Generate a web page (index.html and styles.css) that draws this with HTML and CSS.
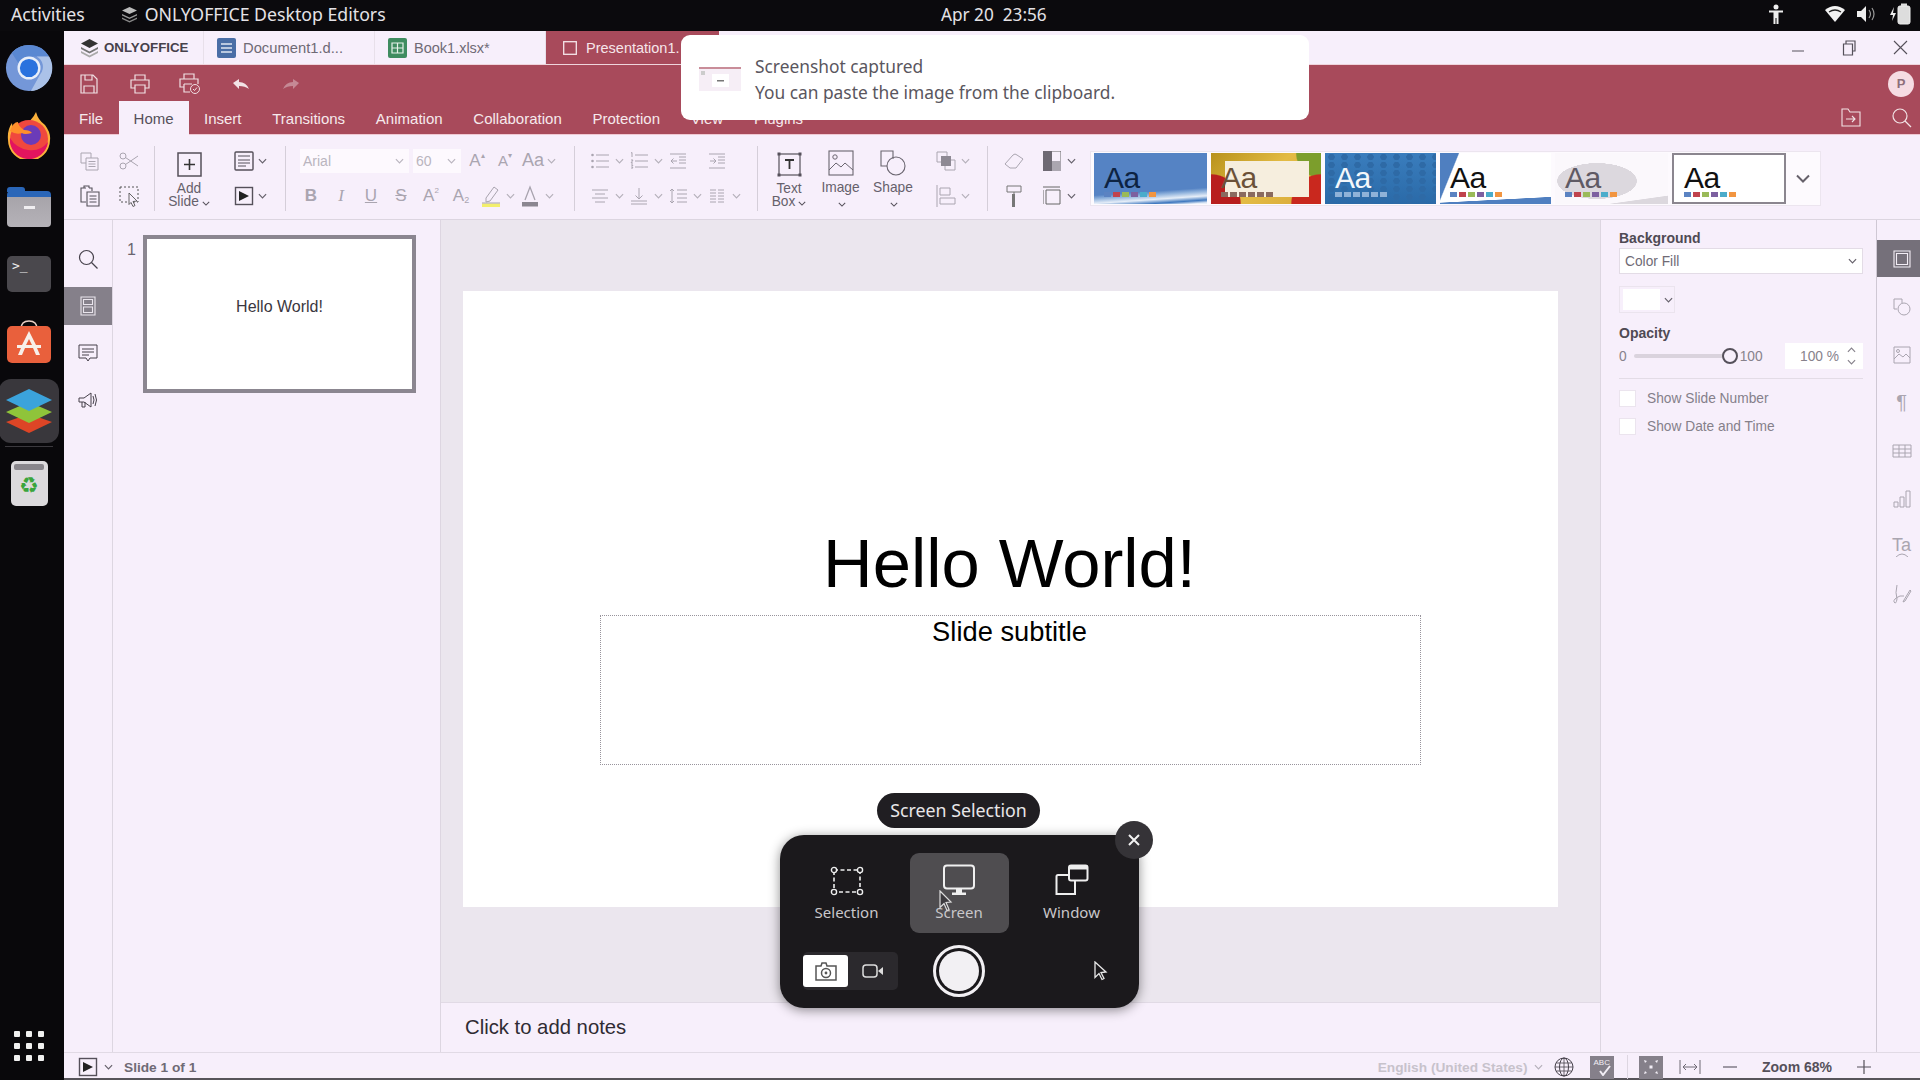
FILE: index.html
```html
<!DOCTYPE html>
<html lang="en">

<head>
    <meta charset="UTF-8">
    <title>ONLYOFFICE Desktop Editors</title>
    <link rel="stylesheet" href="styles.css">
</head>

<body>

    <svg class="sprite" width="0" height="0">
        <symbol id="chev" viewBox="0 0 10 6"><path d="M1 1l4 4 4-4" fill="none" stroke="currentColor" stroke-width="1.3"/></symbol>
        <symbol id="play" viewBox="0 0 20 20"><rect x="1.5" y="1.5" width="17" height="17" fill="none" stroke="currentColor" stroke-width="1.4"/><path d="M5 5l10 5-10 5z" fill="#222"/></symbol>
    </svg>

    <div class="topbar">
        <span class="top-activities">Activities</span>
        <svg class="top-logo" width="17" height="17" viewBox="0 0 17 17"><path d="M8.500 1L16 4.500 8.500 8 1 4.500z" fill="#bbb"/><path d="M1 8l7.500 3.500L16 8v1.500L8.500 13 1 9.500z" fill="#999"/><path d="M1 11.500L8.500 15l7.500-3.500V13l-7.500 3.500L1 13z" fill="#888"/></svg>
        <span class="top-app">ONLYOFFICE Desktop Editors</span>
        <span class="top-clock">Apr 20&nbsp; 23:56</span>
        <div class="top-tray">
            <svg width="18" height="22" viewBox="0 0 18 22"><circle cx="9" cy="4" r="2.500" fill="#eee"/><path d="M2 7.500h14v2h-4.500V21h-2v-6h-1v6h-2V9.500H2z" fill="#eee"/></svg>
            <svg width="22" height="20" viewBox="0 0 22 20"><path d="M1 6q10-8 20 0L11 18z" fill="#f2f2f2"/><path d="M5 8q6-4 12 0" fill="none" stroke="#222" stroke-width="1.300"/></svg>
            <svg width="20" height="20" viewBox="0 0 20 20"><path d="M1 7h4l5-5v16l-5-5H1z" fill="#eee"/><path d="M13 6q3 4 0 8M16 4q4 6 0 12" fill="none" stroke="#999" stroke-width="1.200"/></svg>
            <svg width="22" height="24" viewBox="0 0 22 24"><path d="M5 5L1 13h3l-1 6 4-8H4z" fill="#eee"/><rect x="9" y="4" width="12" height="18" rx="2" fill="#ddd" stroke="#eee"/><rect x="12" y="1.500" width="6" height="2.500" fill="#ddd"/></svg>
        </div>
    </div>

    <div class="desk">
        <div class="dock">
            <div class="dock-item">
                <svg width="48" height="50" viewBox="0 0 50 50"><circle cx="25" cy="25" r="24" fill="#7497d8"/><path d="M25 1a24 24 0 0 1 21 12H25a12 12 0 0 0-11 7L7 9A24 24 0 0 1 25 1z" fill="#5a88d2"/><path d="M37 31L27 49a24 24 0 0 0 19-36H33a12 12 0 0 1 4 18z" fill="#abc2e8"/><circle cx="25" cy="25" r="12" fill="#e9eff9"/><circle cx="25" cy="25" r="9.500" fill="#2a72de"/></svg>
            </div>
            <div class="dock-item">
                <svg class="dock-fox" width="46" height="48" viewBox="0 0 46 48"><path d="M30 1q2 8 9 13 6 8 5 15a21 21 0 0 1-42 0q-1-10 4-17 0 5 4 6 3-4 8-5 8-3 12-12z" fill="#fbb03b"/><circle cx="23" cy="28" r="19" fill="#f0483e"/><path d="M4 27a19 19 0 0 0 38 4q-8 10-20 8T4 27z" fill="#e3145e"/><circle cx="25" cy="24" r="10" fill="#6b3bb8"/><path d="M4 20q3-9 8-9 0 4 6 8 6 0 8 3-8 2-10 0-6 2-12-2z" fill="#ff8f2b"/></svg>
            </div>
            <div class="dock-item">
                <div class="dock-folder"><span class="dock-folder-tab"></span><span class="dock-folder-slot"></span></div>
            </div>
            <div class="dock-item">
                <div class="dock-term">&gt;_</div>
            </div>
            <div class="dock-item">
                <svg width="46" height="46" viewBox="0 0 46 46"><path d="M15 10q0-8 8-8t8 8" fill="none" stroke="#e9cfc4" stroke-width="1.500"/><rect x="1" y="7" width="44" height="37" rx="5" fill="#e9603c"/><path d="M23 12l7 14h5v3h-4l3 7h-4l-3-7H19l-3 7h-4l3-7h-4v-3h5zm0 8l-3 6h6z" fill="#f7efe9"/></svg>
            </div>
            <div class="dock-item dock-item-active">
                <svg width="50" height="46" viewBox="0 0 50 46"><path d="M25 26l23 8-23 11L2 34z" fill="#dd4526"/><path d="M25 14l23 10-23 11L2 24z" fill="#8fc43a"/><path d="M25 1l23 11-23 11L2 12z" fill="#3ba3dc"/></svg>
            </div>
            <div class="dock-line"></div>
            <div class="dock-item">
                <div class="dock-trash"><span class="dock-trash-lid"></span><span class="dock-trash-mark">♻</span></div>
            </div>
            <div class="dock-grid">
                <span></span><span></span><span></span><span></span><span></span><span></span><span></span><span></span><span></span>
            </div>
        </div>

        <div class="app">
            <div class="tabs">
                <div class="tab-logo">
                    <svg width="19" height="20" viewBox="0 0 19 20"><path d="M9.500 1L18 5.500 9.500 10 1 5.500z" fill="#333"/><path d="M1 9l8.500 4.500L18 9v2l-8.500 4.500L1 11z" fill="#777"/><path d="M1 13l8.500 4.500L18 13v2l-8.500 4.500L1 15z" fill="#aaa"/></svg>
                    <span>ONLYOFFICE</span>
                </div>
                <div class="tab">
                    <svg width="19" height="20" viewBox="0 0 19 20"><rect width="19" height="20" rx="2" fill="#4a6ea6"/><path d="M4 6h11M4 10h11M4 14h11" stroke="#dfe6f2" stroke-width="1.500"/></svg>
                    <span class="tab-doc">Document1.d...</span>
                </div>
                <div class="tab">
                    <svg width="19" height="20" viewBox="0 0 19 20"><rect width="19" height="20" rx="2" fill="#3f8c60"/><path d="M4 5h11v10H4zM9.500 5v10M4 10h11" fill="none" stroke="#e6f2ea" stroke-width="1.200"/></svg>
                    <span class="tab-book">Book1.xlsx*</span>
                </div>
                <div class="tab tab-active">
                    <svg width="14" height="14" viewBox="0 0 14 14"><rect x=".7" y=".7" width="12.600" height="12.600" fill="none" stroke="#f6e6ea" stroke-width="1.300"/></svg>
                    <span>Presentation1.</span>
                </div>
                <div class="win-controls">
                    <div class="cell"><svg width="14" height="14" viewBox="0 0 14 14"><path d="M1 10h12" stroke="#8c8792" stroke-width="1.500"/></svg></div>
                    <div class="cell"><svg width="14" height="16" viewBox="0 0 14 16"><path d="M1.500 4h9v11h-9zM4 4V1h9v10h-2.500" fill="none" stroke="#55505a" stroke-width="1.200"/></svg></div>
                    <div class="cell"><svg width="15" height="15" viewBox="0 0 15 15"><path d="M1 1l13 13M14 1L1 14" stroke="#55505a" stroke-width="1.100"/></svg></div>
                </div>
            </div>

            <div class="head">
                <div class="quick">
                    <div class="quick-cell"><svg width="18" height="20" viewBox="0 0 18 20"><path d="M1 1h12l4 4v14H1zM5 1v5h7V1M4 19v-7h10v7" fill="none" stroke="currentColor" stroke-width="1.200"/></svg></div>
                    <div class="quick-cell"><svg width="20" height="20" viewBox="0 0 20 20"><path d="M5 6V1h10v5M5 14H1V6h18v8h-4M5 11h10v8H5z" fill="none" stroke="currentColor" stroke-width="1.200"/></svg></div>
                    <div class="quick-cell"><svg width="22" height="22" viewBox="0 0 22 22"><path d="M5 6V1h10v5M5 14H1V6h18v5M5 11h8M5 11v8h6" fill="none" stroke="currentColor" stroke-width="1.200"/><circle cx="16" cy="16" r="4.500" fill="none" stroke="currentColor"/><path d="M14 16l1.500 1.500 2.500-3" fill="none" stroke="currentColor"/></svg></div>
                    <div class="quick-cell"><svg width="18" height="12" viewBox="0 0 18 12"><path d="M1 5l6-4v3q7 0 10 7-4-3-10-3v3z" fill="#f2e3e6"/></svg></div>
                    <div class="quick-cell quick-off"><svg width="18" height="12" viewBox="0 0 18 12"><path d="M17 5l-6-4v3Q4 4 1 11q4-3 10-3v3z" fill="currentColor"/></svg></div>
                    <div class="avatar">P</div>
                </div>
                <div class="menu">
                    <span class="menu-item">File</span>
                    <span class="menu-item menu-on">Home</span>
                    <span class="menu-item">Insert</span>
                    <span class="menu-item">Transitions</span>
                    <span class="menu-item">Animation</span>
                    <span class="menu-item">Collaboration</span>
                    <span class="menu-item">Protection</span>
                    <span class="menu-item">View</span>
                    <span class="menu-item">Plugins</span>
                    <div class="menu-right">
                        <div class="cell"><svg width="20" height="20" viewBox="0 0 20 20"><path d="M1 18V1h6l2 3h10v14zM5 11h9M11 8l3 3-3 3" fill="none" stroke="#f2e3e6" stroke-width="1.100"/></svg></div>
                        <div class="cell"><svg width="20" height="20" viewBox="0 0 20 20"><circle cx="8" cy="8" r="7" fill="none" stroke="#f2e3e6" stroke-width="1.200"/><path d="M13 13l6 6" stroke="#f2e3e6" stroke-width="1.200"/></svg></div>
                    </div>
                </div>
            </div>

            <div class="ribbon">
                <div class="group group-clip">
                    <div class="row">
                        <div class="tool off"><svg width="20" height="20" viewBox="0 0 20 20"><path d="M1 2h10v10H1z" fill="none" stroke="currentColor"/><path d="M6 7h12v12H6z" fill="#f7effb" stroke="currentColor"/><path d="M8.500 10.500h7M8.500 13h7M8.500 15.500h7" stroke="currentColor"/></svg></div>
                        <div class="tool off"><svg width="20" height="18" viewBox="0 0 20 18"><circle cx="4" cy="4" r="3" fill="none" stroke="currentColor"/><circle cx="4" cy="14" r="3" fill="none" stroke="currentColor"/><path d="M6.500 5.500L19 14M6.500 12.500L19 4" stroke="currentColor"/></svg></div>
                    </div>
                    <div class="row">
                        <div class="tool"><svg width="20" height="22" viewBox="0 0 20 22"><path d="M6 3H1v14h5M4 3V1h5v2M9 3h3v3" fill="none" stroke="currentColor" stroke-width="1.100"/><path d="M7 7h12v14H7zM9.500 11h7M9.500 14h7M9.500 17h7" fill="none" stroke="currentColor" stroke-width="1.100"/></svg></div>
                        <div class="tool off"><svg width="20" height="22" viewBox="0 0 20 22"><path d="M1 2h18v15H1z" fill="none" stroke="#555" stroke-dasharray="2 2"/><path d="M10 8l8 8-4 .500 2 4-2 1-2-4-2 2z" fill="#f7effb" stroke="#555" stroke-width=".9"/></svg></div>
                    </div>
                </div>
                <div class="sep"></div>
                <div class="group group-slide">
                    <div class="big big-add">
                        <svg width="25" height="25" viewBox="0 0 25 25"><rect x="1" y="1" width="23" height="23" fill="none" stroke="#55505a" stroke-width="1.500"/><path d="M12.500 7v11M7 12.500h11" stroke="#333" stroke-width="1.600"/></svg>
                        <span class="big-label">Add<br>Slide<svg class="chev-inline" width="8" height="5"><use href="#chev"/></svg></span>
                    </div>
                    <div class="stack">
                        <div class="tool-chev">
                            <svg width="20" height="20" viewBox="0 0 20 20"><rect x="1" y="1" width="18" height="18" rx="1" fill="none" stroke="#55505a" stroke-width="1.400"/><path d="M4 5h12M4 9h12M4 12h12M4 15h8" stroke="#55505a"/></svg>
                            <svg class="chev" width="9" height="6"><use href="#chev"/></svg>
                        </div>
                        <div class="tool-chev">
                            <svg width="20" height="20" class="dark-icon"><use href="#play"/></svg>
                            <svg class="chev" width="9" height="6"><use href="#chev"/></svg>
                        </div>
                    </div>
                </div>
                <div class="sep"></div>
                <div class="group group-font">
                    <div class="row row-font1">
                        <div class="box box-font">Arial<svg class="chev" width="9" height="6"><use href="#chev"/></svg></div>
                        <div class="box box-size">60<svg class="chev" width="9" height="6"><use href="#chev"/></svg></div>
                        <div class="glyph w28 off">A<sup>▴</sup></div>
                        <div class="glyph w28 off small">A<sup>▾</sup></div>
                        <div class="glyph w28 off big-aa">Aa</div>
                        <svg class="chev off" width="9" height="6"><use href="#chev"/></svg>
                    </div>
                    <div class="row row-font2">
                        <div class="glyph w30 off"><b>B</b></div>
                        <div class="glyph w30 off"><i class="serif-i">I</i></div>
                        <div class="glyph w30 off"><u>U</u></div>
                        <div class="glyph w30 off"><s>S</s></div>
                        <div class="glyph w30 off">A<sup>2</sup></div>
                        <div class="glyph w30 off">A<sub>2</sub></div>
                        <div class="tool w30"><svg width="20" height="22" viewBox="0 0 20 22"><path d="M5 13L13 2l4 3-8 11-4 1z" fill="none" stroke="#a8a3ae"/><rect x="1" y="18.500" width="18" height="3.500" fill="#f2ee6c"/><path d="M1 18h18" stroke="#a8a3ae"/></svg></div>
                        <svg class="chev off" width="9" height="6"><use href="#chev"/></svg>
                        <div class="tool w30 tool-a"><svg width="20" height="22" viewBox="0 0 20 22"><path d="M5 15L10 2l5 13" fill="none" stroke="#a8a3ae" stroke-width="1.300"/><rect x="2" y="17" width="16" height="4.500" fill="#8b8690"/></svg></div>
                        <svg class="chev off" width="9" height="6"><use href="#chev"/></svg>
                    </div>
                </div>
                <div class="sep"></div>
                <div class="group group-para">
                    <div class="row">
                        <div class="tool-cell">
                            <div class="tool w30 off"><svg width="18" height="16" viewBox="0 0 18 16"><path d="M5 2h13M5 8h13M5 14h13" stroke="currentColor"/><circle cx="1.500" cy="2" r="1.300" fill="currentColor"/><circle cx="1.500" cy="8" r="1.300" fill="currentColor"/><circle cx="1.500" cy="14" r="1.300" fill="currentColor"/></svg></div>
                            <svg class="chev off" width="9" height="6"><use href="#chev"/></svg>
                        </div>
                        <div class="tool-cell">
                            <div class="tool w30 off"><svg width="18" height="18" viewBox="0 0 18 18"><path d="M5 3h13M5 9h13M5 15h13M1 1l1-.500V5M1 8h2l-2 3h2M1 13h2l-1 1.500 1 1.500H1" fill="none" stroke="currentColor"/></svg></div>
                            <svg class="chev off" width="9" height="6"><use href="#chev"/></svg>
                        </div>
                        <div class="tool-cell">
                            <div class="tool w30 off"><svg width="16" height="16" viewBox="0 0 16 16"><path d="M0 1h16M9 4h7M9 7h7M9 10h7M0 15h16M7 8H1M3.500 5.500L1 8l2.500 2.500" fill="none" stroke="currentColor"/></svg></div>
                        </div>
                        <div class="tool-cell">
                            <div class="tool w30 off"><svg width="16" height="16" viewBox="0 0 16 16"><path d="M0 1h16M9 4h7M9 7h7M9 10h7M0 15h16M1 8h6M4.500 5.500L7 8l-2.500 2.500" fill="none" stroke="currentColor"/></svg></div>
                        </div>
                    </div>
                    <div class="row">
                        <div class="tool-cell">
                            <div class="tool w30 off"><svg width="16" height="14" viewBox="0 0 16 14"><path d="M0 1h16M3 5h10M0 9h16M3 13h10" stroke="currentColor"/></svg></div>
                            <svg class="chev off" width="9" height="6"><use href="#chev"/></svg>
                        </div>
                        <div class="tool-cell">
                            <div class="tool w30 off"><svg width="16" height="18" viewBox="0 0 16 18"><path d="M8 1v11M4.500 8.500L8 12l3.500-3.500M0 14h16M0 17h16" fill="none" stroke="currentColor"/></svg></div>
                            <svg class="chev off" width="9" height="6"><use href="#chev"/></svg>
                        </div>
                        <div class="tool-cell">
                            <div class="tool w30 off"><svg width="18" height="16" viewBox="0 0 18 16"><path d="M3 1v14M1 3l2-2 2 2M1 13l2 2 2-2M8 2h10M8 6h10M8 10h10M8 14h10" fill="none" stroke="currentColor"/></svg></div>
                            <svg class="chev off" width="9" height="6"><use href="#chev"/></svg>
                        </div>
                        <div class="tool-cell">
                            <div class="tool w30 off"><svg width="14" height="14" viewBox="0 0 14 14"><path d="M0 1h6M8 1h6M0 4h6M8 4h6M0 7h6M8 7h6M0 10h6M8 10h6M0 13h6M8 13h6" stroke="currentColor"/></svg></div>
                            <svg class="chev off" width="9" height="6"><use href="#chev"/></svg>
                        </div>
                    </div>
                </div>
                <div class="sep"></div>
                <div class="group group-insert">
                    <div class="big big-text">
                        <svg width="25" height="25" viewBox="0 0 25 25"><rect x="2" y="2" width="21" height="21" fill="none" stroke="#55505a" stroke-width="1.200"/><rect x=".5" y=".5" width="3" height="3" fill="#55505a"/><rect x="21.500" y=".5" width="3" height="3" fill="#55505a"/><rect x=".5" y="21.500" width="3" height="3" fill="#55505a"/><rect x="21.500" y="21.500" width="3" height="3" fill="#55505a"/><path d="M8 8h9M12.500 8v9" stroke="#333" stroke-width="1.800"/></svg>
                        <span class="big-label">Text<br>Box<svg class="chev-inline" width="8" height="5"><use href="#chev"/></svg></span>
                    </div>
                    <div class="big big-image">
                        <svg width="26" height="26" viewBox="0 0 26 26"><rect x="1" y="1" width="24" height="24" fill="none" stroke="#6a656f" stroke-width="1.100"/><circle cx="7" cy="7" r="2.200" fill="none" stroke="#6a656f"/><path d="M1 20l7-7 5 4 4-4 8 7" fill="none" stroke="#6a656f"/></svg>
                        <span class="big-label">Image<br><svg class="chev-inline" width="8" height="5"><use href="#chev"/></svg></span>
                    </div>
                    <div class="big big-shape">
                        <svg width="26" height="26" viewBox="0 0 26 26"><path d="M13 9V1H1v15h6" fill="none" stroke="#6a656f" stroke-width="1.100"/><circle cx="16" cy="16" r="9" fill="none" stroke="#6a656f" stroke-width="1.100"/></svg>
                        <span class="big-label">Shape<br><svg class="chev-inline" width="8" height="5"><use href="#chev"/></svg></span>
                    </div>
                    <div class="stack stack-arrange">
                        <div class="tool-cell">
                            <div class="tool w30 off"><svg width="20" height="20" viewBox="0 0 20 20"><path d="M1 1h10v10H1zM9 9h10v10H9z" fill="none" stroke="currentColor"/><rect x="5" y="5" width="10" height="10" fill="#8e8994"/></svg></div>
                            <svg class="chev off" width="9" height="6"><use href="#chev"/></svg>
                        </div>
                        <div class="tool-cell">
                            <div class="tool w30 off"><svg width="20" height="22" viewBox="0 0 20 22"><path d="M1 0v22M4 3h10v7H4zM4 13h15v6H4z" fill="none" stroke="currentColor"/></svg></div>
                            <svg class="chev off" width="9" height="6"><use href="#chev"/></svg>
                        </div>
                    </div>
                </div>
                <div class="sep"></div>
                <div class="group group-design">
                    <div class="row">
                        <div class="tool w47 off"><svg width="20" height="16" viewBox="0 0 20 16"><path d="M1 11L9 2q2-2 4 0l6 4-7 9H6z" fill="none" stroke="currentColor"/></svg></div>
                        <div class="tool-cell">
                            <div class="tool w30"><svg width="18" height="20" viewBox="0 0 18 20"><rect width="18" height="20" fill="#f7effb" stroke="#666"/><rect width="9" height="20" fill="#6e6973"/><rect x="9" y="10" width="9" height="10" fill="#aba6b0"/></svg></div>
                            <svg class="chev" width="9" height="6"><use href="#chev"/></svg>
                        </div>
                    </div>
                    <div class="row">
                        <div class="tool w47 off"><svg width="16" height="22" viewBox="0 0 16 22"><path d="M1 1h14v6H1z" fill="none" stroke="#777"/><rect x="6" y="9" width="3" height="13" fill="#777"/><path d="M8 7v2" stroke="#777"/></svg></div>
                        <div class="tool-cell">
                            <div class="tool w30"><svg width="18" height="20" viewBox="0 0 18 20"><path d="M3 4h14v14H3z" fill="none" stroke="#666"/><path d="M0 1h17M0 4v14" stroke="#666"/></svg></div>
                            <svg class="chev" width="9" height="6"><use href="#chev"/></svg>
                        </div>
                    </div>
                </div>
                <div class="gallery">
                    <div class="theme theme-1"><span class="theme-aa">Aa</span><span class="swatches"><i></i><i></i><i></i><i></i><i></i><i></i></span></div>
                    <div class="theme theme-2"><span class="theme-aa">Aa</span><span class="swatches"><i></i><i></i><i></i><i></i><i></i><i></i></span></div>
                    <div class="theme theme-3"><span class="theme-aa">Aa</span><span class="swatches"><i></i><i></i><i></i><i></i><i></i><i></i></span></div>
                    <div class="theme theme-4"><span class="theme-aa">Aa</span><span class="swatches"><i></i><i></i><i></i><i></i><i></i><i></i></span></div>
                    <div class="theme theme-5"><span class="theme-aa">Aa</span><span class="swatches"><i></i><i></i><i></i><i></i><i></i><i></i></span></div>
                    <div class="theme theme-6"><span class="theme-aa">Aa</span><span class="swatches"><i></i><i></i><i></i><i></i><i></i><i></i></span></div>
                    <div class="gallery-more"><svg width="16" height="9"><use href="#chev"/></svg></div>
                </div>
            </div>

            <div class="main">
                <div class="leftbar">
                    <div class="side-btn"><svg width="20" height="20" viewBox="0 0 20 20"><circle cx="8.500" cy="8.500" r="7" fill="none" stroke="#46414b" stroke-width="1.200"/><path d="M13.500 13.500l6 6" stroke="#46414b" stroke-width="1.200"/></svg></div>
                    <div class="side-btn side-on"><svg width="16" height="20" viewBox="0 0 16 20"><path d="M1 1h14v18H1zM3.500 3.500h9v5h-9zM3.500 11h9v5.500h-9z" fill="none" stroke="#e9e4ec" stroke-width="1.100"/></svg></div>
                    <div class="side-btn"><svg width="20" height="19" viewBox="0 0 20 19"><path d="M1 1h18v13h-7l-2 3-2-3H1zM4 5h12M4 8h12M4 11h7" fill="none" stroke="#46414b"/></svg></div>
                    <div class="side-btn"><svg width="20" height="18" viewBox="0 0 20 18"><path d="M1 7h5l7-5v14l-7-5H1zM4 11v5h3v-5M15 5q2 4 0 8M17 3q3 6 0 12" fill="none" stroke="#46414b"/></svg></div>
                </div>
                <div class="thumbs">
                    <span class="thumb-num">1</span>
                    <div class="thumb">Hello World!</div>
                </div>
                <div class="workarea">
                    <div class="canvas">
                        <div class="slide">
                            <div class="slide-title">Hello World!</div>
                            <div class="slide-sub">Slide subtitle</div>
                        </div>
                    </div>
                    <div class="notes">Click to add notes</div>
                </div>
                <div class="panel">
                    <div class="panel-label">Background</div>
                    <div class="select">Color Fill<svg class="chev" width="9" height="6"><use href="#chev"/></svg></div>
                    <div class="color-pick"><span class="color-swatch"></span><svg class="chev" width="9" height="6"><use href="#chev"/></svg></div>
                    <div class="panel-label panel-opacity">Opacity</div>
                    <div class="opacity-row">
                        <span>0</span>
                        <div class="track"><span class="knob"></span></div>
                        <span>100</span>
                        <div class="spin">100 %<div class="spin-arrows"><svg width="9" height="6" class="flip"><use href="#chev"/></svg><svg width="9" height="6"><use href="#chev"/></svg></div></div>
                    </div>
                    <div class="panel-line"></div>
                    <div class="check"><span class="check-box"></span>Show Slide Number</div>
                    <div class="check"><span class="check-box"></span>Show Date and Time</div>
                </div>
                <div class="rightbar">
                    <div class="right-btn right-on"><svg width="18" height="18" viewBox="0 0 18 18"><path d="M1 1h16v16H1zM3.500 3.500h11v11h-11z" fill="none" stroke="#f2edf5" stroke-width="1.100"/></svg></div>
                    <div class="right-btn"><svg width="18" height="18" viewBox="0 0 18 18"><path d="M9 5V1H1v10h3" fill="none" stroke="#aaa5b0"/><circle cx="11" cy="11" r="6" fill="none" stroke="#aaa5b0"/></svg></div>
                    <div class="right-btn"><svg width="18" height="18" viewBox="0 0 18 18"><path d="M1 1h16v16H1z" fill="none" stroke="#aaa5b0"/><circle cx="5" cy="5" r="1.500" fill="none" stroke="#aaa5b0"/><path d="M1 13l5-5 4 3 3-3 4 4" fill="none" stroke="#aaa5b0"/></svg></div>
                    <div class="right-btn right-para">¶</div>
                    <div class="right-btn"><svg width="20" height="14" viewBox="0 0 20 14"><path d="M1 1h18v12H1zM1 5h18M1 9h18M7 1v12M13 1v12" fill="none" stroke="#aaa5b0"/></svg></div>
                    <div class="right-btn"><svg width="18" height="18" viewBox="0 0 18 18"><path d="M1 12h4v5H1zM7 7h4v10H7zM13 1h4v16h-4z" fill="none" stroke="#aaa5b0"/></svg></div>
                    <div class="right-btn right-ta">Ta<svg width="14" height="4" viewBox="0 0 14 4"><path d="M1 4q6-6 12 0" fill="none" stroke="#aaa5b0"/></svg></div>
                    <div class="right-btn"><svg width="20" height="22" viewBox="0 0 20 22"><path d="M5 1q-2 8 0 14-1 6-3 3-1-3 6-6h4M12 16l6-10 1 1-6 10-2 1z" fill="none" stroke="#aaa5b0"/></svg></div>
                </div>
            </div>

            <div class="status">
                <svg class="status-play" width="20" height="20"><use href="#play"/></svg>
                <svg class="chev status-chev" width="9" height="6"><use href="#chev"/></svg>
                <span class="status-slide">Slide 1 of 1</span>
                <div class="status-right">
                    <span class="status-lang">English (United States)</span>
                    <svg class="chev off status-chev2" width="9" height="6"><use href="#chev"/></svg>
                    <svg class="status-globe" width="20" height="20" viewBox="0 0 20 20"><circle cx="10" cy="10" r="9" fill="none" stroke="#46414b"/><ellipse cx="10" cy="10" rx="4.500" ry="9" fill="none" stroke="#46414b"/><path d="M10 1v18M1 10h18M2 6h16M2 14h16" fill="none" stroke="#46414b" stroke-width=".8"/></svg>
                    <div class="status-btn"><svg width="18" height="18" viewBox="0 0 18 18"><path d="M7 13l3 4 7-9" fill="none" stroke="#f2edf5" stroke-width="2"/></svg><span class="abc">ABC</span></div>
                    <div class="status-div"></div>
                    <div class="status-btn status-fit"><svg width="16" height="16" viewBox="0 0 16 16"><path d="M1 1l3 1-2 2zM15 1l-1 3-2-2zM1 15l1-3 2 2zM15 15l-3-1 2-2z" fill="#f2edf5"/><rect x="6.500" y="6.500" width="3" height="3" fill="#f2edf5"/></svg></div>
                    <svg class="status-width" width="22" height="14" viewBox="0 0 22 14"><path d="M1 0v14M21 0v14M4 7h14M7 4L4 7l3 3M15 4l3 3-3 3" fill="none" stroke="#6f6a75"/></svg>
                    <svg class="status-minus" width="14" height="2"><path d="M0 1h14" stroke="#6f6a75" stroke-width="1.300"/></svg>
                    <span class="status-zoom">Zoom 68%</span>
                    <svg class="status-plus" width="14" height="14"><path d="M0 7h14M7 0v14" stroke="#55505a" stroke-width="1.200"/></svg>
                </div>
            </div>
        </div>
    </div>

    <!-- things floating over the window -->
    <div class="toast">
        <svg class="toast-thumb" width="42" height="24" viewBox="0 0 42 24"><rect width="42" height="24" fill="#f6eef6"/><rect width="42" height="2" fill="#c98d99"/><rect x="13" y="7" width="17" height="13" fill="#fff"/><rect x="18" y="13" width="7" height="1.500" fill="#777"/><rect x="2" y="4" width="4" height="4" fill="#ccc"/></svg>
        <div>
            <div>Screenshot captured</div>
            <div>You can paste the image from the clipboard.</div>
        </div>
    </div>

    <div class="shot-tip">Screen Selection</div>

    <div class="shot">
        <div class="shot-modes">
            <div class="shot-mode">
                <svg width="34" height="30" viewBox="0 0 34 30"><rect x="4" y="4" width="26" height="22" fill="none" stroke="#eee" stroke-width="1.600" stroke-dasharray="4 2.500"/><circle cx="4" cy="4" r="2.600" fill="#1b191c" stroke="#eee" stroke-width="1.400"/><circle cx="30" cy="4" r="2.600" fill="#1b191c" stroke="#eee" stroke-width="1.400"/><circle cx="4" cy="26" r="2.600" fill="#1b191c" stroke="#eee" stroke-width="1.400"/><circle cx="30" cy="26" r="2.600" fill="#1b191c" stroke="#eee" stroke-width="1.400"/></svg>
                <span>Selection</span>
            </div>
            <div class="shot-mode shot-mode-on">
                <svg width="34" height="32" viewBox="0 0 34 32"><rect x="2" y="1.500" width="30" height="23" rx="3" fill="none" stroke="#f0f0f0" stroke-width="2"/><rect x="14" y="25" width="6" height="4" fill="#f0f0f0"/><rect x="10" y="28.500" width="14" height="2.500" fill="#f0f0f0"/></svg>
                <span>Screen</span>
            </div>
            <div class="shot-mode">
                <svg width="34" height="32" viewBox="0 0 34 32"><rect x="14" y="1.500" width="18.500" height="15" rx="2" fill="none" stroke="#eee" stroke-width="2"/><rect x="14" y="1.500" width="18.500" height="4" fill="#eee"/><path d="M14 11H3a1.500 1.500 0 0 0-1.500 1.500V30H20V17" fill="none" stroke="#eee" stroke-width="2"/></svg>
                <span>Window</span>
            </div>
        </div>
        <div class="shot-bottom">
            <div class="shot-toggle">
                <div class="shot-toggle-on"><svg width="22" height="20" viewBox="0 0 22 20"><path d="M1 5h5l1-3h4l1 3h9v14H1z" fill="none" stroke="#555" stroke-width="1.500"/><circle cx="11" cy="12" r="4.500" fill="none" stroke="#555" stroke-width="1.500"/><circle cx="11" cy="12" r="1.400" fill="#555"/></svg></div>
                <div class="shot-toggle-off"><svg width="22" height="14" viewBox="0 0 22 14"><rect x="1" y="1" width="14" height="12" rx="3" fill="none" stroke="#ddd" stroke-width="1.500"/><path d="M16 7l5-4v8z" fill="#ddd"/></svg></div>
            </div>
            <div class="shutter"><span class="shutter-in"></span></div>
            <svg class="shot-pointer" width="14" height="20" viewBox="0 0 14 20"><path d="M1 1l11 10-5 .500 3 6-2 1-3-6-4 4z" fill="#1b191c" stroke="#e8e8e8" stroke-width="1.300"/></svg>
        </div>
    </div>
    <button class="shot-close"><svg width="12" height="12" viewBox="0 0 12 12"><path d="M1 1l10 10M11 1L1 11" stroke="#f2f2f2" stroke-width="2"/></svg></button>
    <svg class="cursor" width="14" height="22" viewBox="0 0 14 22"><path d="M1 1l11 11-5 .500 3 7-2 1-3-7-4 4z" fill="#3c3a3e" stroke="#ddd" stroke-width="1.200"/></svg>

</body>

</html>
```
FILE: styles.css
```css
html, body {
    margin: 0;
    padding: 0;
    height: 100%;
    overflow: hidden;
}

body {
    width: 1920px;
    height: 1080px;
    display: flex;
    flex-direction: column;
    background-color: #09080b;
    font-family: "Liberation Sans", Arial, sans-serif;
    color: #55505a;
}

.sprite {
    position: absolute;
}

/* gnome top bar */
.topbar {
    height: 31px;
    flex: none;
    display: flex;
    align-items: center;
    padding-bottom: 3px;
    box-sizing: border-box;
    background-color: #0b0a0d;
    color: #e4e2e6;
    font-family: "Noto Sans", sans-serif;
    font-size: 17.700px;
    position: relative;
}

.top-activities {
    margin-left: 11px;
}

.top-logo {
    margin-left: 36px;
}

.top-app {
    margin-left: 7px;
}

.top-clock {
    position: absolute;
    left: 941px;
    font-size: 17.200px;
}

.top-tray {
    margin-left: auto;
    display: flex;
    align-items: center;
    gap: 10px;
    margin-right: 9px;
}

.top-tray svg:first-child {
    margin-right: 29px;
}

.top-tray svg:last-child {
    margin-left: 3px;
}

.desk {
    flex: 1;
    display: flex;
    min-height: 0;
}

/* dock */
.dock {
    width: 64px;
    flex: none;
    display: flex;
    flex-direction: column;
    align-items: center;
    padding-top: 3px;
    box-sizing: border-box;
}

.dock-item {
    width: 60px;
    height: 68.500px;
    flex: none;
    display: flex;
    align-items: center;
    justify-content: center;
    margin-left: -6px;
}

.dock-item-active {
    height: 64px;
    margin-top: 2px;
    background-color: #39373c;
    border-radius: 12px;
}

.dock-fox {
    margin-bottom: 4px;
}

.dock-line {
    width: 48px;
    height: 1px;
    margin: 3px 0 3px -6px;
    background-color: #3b393e;
}

.dock-folder {
    width: 44px;
    height: 36px;
    margin-top: 8px;
    position: relative;
    border-radius: 4px;
    background: linear-gradient(#a7a4aa, #b5b2b8);
    border-top: 6px solid #2a66b8;
    box-sizing: border-box;
}

.dock-folder-tab {
    position: absolute;
    left: 0;
    top: -10px;
    width: 18px;
    height: 5px;
    background-color: #2a66b8;
    border-radius: 3px 3px 0 0;
}

.dock-folder-slot {
    position: absolute;
    left: 17px;
    top: 9px;
    width: 11px;
    height: 3px;
    background-color: #f0eef1;
}

.dock-term {
    width: 44px;
    height: 36px;
    border-radius: 5px;
    background-color: #4a484d;
    color: #eee;
    font-family: "DejaVu Sans Mono", monospace;
    font-size: 13px;
    line-height: 16px;
    padding: 2px 0 0 5px;
    box-sizing: border-box;
}

.dock-trash {
    width: 37px;
    height: 45px;
    border-radius: 5px;
    background-color: #dcdadd;
    display: flex;
    flex-direction: column;
    align-items: center;
}

.dock-trash-lid {
    width: 30px;
    height: 6px;
    margin-top: 3px;
    border-radius: 2px;
    background-color: #89868c;
}

.dock-trash-mark {
    color: #3aa53c;
    font-family: "DejaVu Sans", sans-serif;
    font-size: 22px;
    line-height: 32px;
}

.dock-grid {
    margin-top: auto;
    margin-bottom: 19px;
    margin-left: -6px;
    display: grid;
    grid-template-columns: repeat(3, 6px);
    gap: 6px;
}

.dock-grid span {
    width: 6px;
    height: 6px;
    border-radius: 1px;
    background-color: #f0f0f0;
}

/* window */
.app {
    flex: 1;
    min-width: 0;
    display: flex;
    flex-direction: column;
    background-color: #f7effb;
    border-bottom: 2px solid #57545a;
    box-sizing: border-box;
}

.tabs {
    height: 34px;
    flex: none;
    display: flex;
    font-size: 14.500px;
    color: #6f6a75;
    border-bottom: 1px solid #efd4dc;
    box-sizing: border-box;
}

.tab-logo {
    width: 140px;
    display: flex;
    align-items: center;
    gap: 5px;
    padding-left: 16px;
    box-sizing: border-box;
    border-right: 1px solid #e8e0ea;
    font-weight: bold;
    font-size: 13.300px;
    color: #46414b;
}

.tab {
    width: 171px;
    display: flex;
    align-items: center;
    gap: 7px;
    padding-left: 13px;
    box-sizing: border-box;
    border-right: 1px solid #e8e0ea;
}

.tab-active {
    width: 173px;
    padding-left: 17px;
    gap: 9px;
    background-color: #a84a5b;
    color: #f6e6ea;
    border-right: none;
}

.tab-doc {
    font-size: 14.750px;
}

.win-controls,
.menu-right {
    margin-left: auto;
    display: flex;
    align-items: center;
    gap: 11px;
}

.cell {
    width: 40px;
    display: flex;
    justify-content: center;
}

.head {
    height: 70px;
    flex: none;
    background-color: #a84a5b;
    color: #f0dfe3;
    border-bottom: 1px solid #efc8d2;
    box-sizing: border-box;
}

.quick {
    height: 36px;
    padding-top: 1px;
    box-sizing: border-box;
    display: flex;
    align-items: center;
}

.quick-cell {
    width: 50.500px;
    display: flex;
    justify-content: center;
}

.quick-off {
    color: #c58995;
}

.avatar {
    margin-left: auto;
    margin-right: 6px;
    width: 26px;
    height: 26px;
    border-radius: 50%;
    background-color: #f6dce3;
    color: #8d6f7a;
    font-size: 13px;
    font-weight: bold;
    line-height: 26px;
    text-align: center;
}

.menu {
    height: 33px;
    display: flex;
    align-items: stretch;
    font-size: 15px;
    color: #f6e9ec;
}

.menu-item {
    padding: 0 15.400px;
    line-height: 35px;
}

.menu-item:first-child {
    padding-left: 15px;
}

.menu-on {
    padding: 0 15px;
    background-color: #f7effb;
    color: #55505a;
    height: 34px;
}

.menu-right {
    align-self: center;
    margin-right: -2px;
}

/* ribbon */
.ribbon {
    height: 85px;
    flex: none;
    display: flex;
    align-items: center;
    padding-top: 2px;
    border-bottom: 1px solid #dcd5e0;
    box-sizing: border-box;
}

.group {
    height: 70px;
    flex: none;
    box-sizing: border-box;
}

.sep {
    width: 1px;
    height: 65px;
    flex: none;
    background-color: #d5ced9;
}

.row {
    height: 35px;
    display: flex;
    align-items: center;
}

.tool,
.glyph {
    height: 35px;
    width: 39px;
    flex: none;
    display: flex;
    align-items: center;
    justify-content: center;
    color: #55505a;
}

.off {
    color: #aaa5b0;
}

.w28 {
    width: 28px;
}

.w30 {
    width: 30px;
}

.w47 {
    width: 47px;
}

.chev {
    flex: none;
    color: #66616b;
}

.chev.off {
    color: #b5b0ba;
}

.chev-inline {
    margin-left: 3px;
    color: #55505a;
}

.group-clip {
    width: 90px;
    padding-left: 6px;
}

.group-slide {
    width: 130px;
    display: flex;
}

.big {
    display: flex;
    flex-direction: column;
    align-items: center;
    font-size: 13.750px;
    flex: none;
    padding-top: 9px;
    box-sizing: border-box;
    height: 70px;
}

.big-label {
    margin-top: 5px;
    text-align: center;
    line-height: 13px;
    color: #66616b;
}

.big-image svg:first-child,
.big-shape svg:first-child {
    margin-top: -2px;
}

.big-image .big-label,
.big-shape .big-label {
    margin-top: 4px;
    line-height: 15px;
}

.big-add {
    width: 68px;
}

.stack {
    flex: none;
}

.tool-chev {
    height: 35px;
    display: flex;
    align-items: center;
    gap: 4px;
    padding-left: 11px;
}

.dark-icon {
    color: #55505a;
}

.group-font {
    width: 288px;
}

.row-font1 {
    padding-left: 14px;
}

.row-font2 {
    padding-left: 10px;
}

.box {
    height: 24px;
    display: flex;
    align-items: center;
    justify-content: space-between;
    padding: 0 5px 0 3px;
    box-sizing: border-box;
    background-color: #fdf9fe;
    color: #bab5bf;
    font-size: 14px;
}

.box .chev {
    color: #bab5bf;
}

.box-font {
    width: 109px;
    margin-right: 4px;
}

.box-size {
    width: 48px;
    margin-right: 2px;
}

.glyph {
    font-size: 17px;
    font-family: "Liberation Sans", sans-serif;
}

.glyph sup {
    font-size: 8px;
    line-height: 0;
    margin-bottom: 10px;
}

.glyph sub {
    font-size: 9px;
    line-height: 0;
    margin-top: 9px;
}

.glyph.small {
    font-size: 15px;
}

.big-aa {
    font-size: 18px;
}

.serif-i {
    font-family: "Liberation Serif", serif;
    font-weight: normal;
}

.group-para {
    width: 182px;
    padding-left: 10px;
}

.tool-cell {
    width: 39px;
    flex: none;
    display: flex;
    align-items: center;
}

.tool-a {
    margin-left: 0;
}

.group-insert {
    width: 229px;
    display: flex;
    padding-left: 5px;
}

.big-text {
    width: 52px;
}

.big-image {
    width: 51px;
}

.big-shape {
    width: 54px;
}

.stack-arrange {
    margin-left: 11px;
}

.group-design {
    width: 102px;
    padding-left: 2px;
}

.gallery {
    width: 731px;
    height: 55px;
    flex: none;
    display: flex;
    align-items: center;
    gap: 4px;
    padding-left: 3px;
    box-sizing: border-box;
    background-color: #fdfafe;
    border: 1px solid #ece5ef;
}

.theme {
    width: 111px;
    height: 51px;
    flex: none;
    box-sizing: border-box;
    padding: 11px 0 0 10px;
    display: flex;
    flex-direction: column;
    color: #111;
    background-color: #fff;
}

.theme-aa {
    font-size: 30px;
    line-height: 27px;
    letter-spacing: -0.500px;
}

.swatches {
    display: flex;
    gap: 2px;
    margin-top: 1px;
}

.swatches i {
    width: 7px;
    height: 5px;
    background-color: #5b83c2;
}

.swatches i:nth-child(2) {
    background-color: #c0434d;
}

.swatches i:nth-child(3) {
    background-color: #9aba59;
}

.swatches i:nth-child(4) {
    background-color: #7d60a0;
}

.swatches i:nth-child(5) {
    background-color: #4baccb;
}

.swatches i:nth-child(6) {
    background-color: #f29540;
}

.theme-1 {
    width: 113px;
    background: linear-gradient(176deg, #5583c4 0 72%, #8fb2dc 78%, #e6eef8 86%, #3f78bf 93%, #e8eff8 98%);
    color: #0d2342;
}

.theme-2 {
    width: 110px;
    background:
        linear-gradient(#f6eede, #f6eede) 14px 8px / 84px 36px no-repeat,
        radial-gradient(circle at 0 100%, #b81e1e 0 24%, transparent 25%),
        radial-gradient(circle at 100% 100%, #c9281e 0 24%, transparent 25%),
        radial-gradient(circle at 100% 0, #7c9e2c 0 20%, transparent 21%),
        linear-gradient(135deg, #b8921c, #e3bb44 50%, #d8a83a);
    color: #6b5138;
}

.theme-2 .swatches i {
    background-color: #8a6a5f;
}

.theme-3 {
    background:
        radial-gradient(circle, #2e6aa6 0 3px, transparent 3.500px) 0 0 / 13px 8px,
        linear-gradient(#3a7dbd, #2a6aa8);
    color: #f3f7fb;
}

.theme-3 .swatches i {
    background-color: #8fb2d8;
}

.theme-4 {
    background:
        linear-gradient(-3deg, #4f7fc0 0 12%, transparent 13%),
        linear-gradient(112deg, #4f7fc0 0 14%, transparent 15%),
        #fff;
    width: 111px;
}

.theme-5 {
    width: 113px;
    background:
        linear-gradient(-8deg, #dcd8de 0 12%, transparent 13%),
        radial-gradient(ellipse 40px 18px at 42px 28px, #dcd8de 0 99%, transparent),
        #fbf8fc;
    color: #5f5a64;
}

.theme-6 {
    width: 114px;
    border: 2px solid #8b868f;
    padding: 9px 0 0 10px;
}

.gallery-more {
    flex: 1;
    display: flex;
    justify-content: center;
    color: #66616b;
    padding-right: 4px;
}

/* main area */
.main {
    flex: 1;
    min-height: 0;
    display: flex;
}

.leftbar {
    width: 49px;
    flex: none;
    border-right: 1px solid #ddd6e1;
    box-sizing: border-box;
    display: flex;
    flex-direction: column;
    padding-top: 20px;
    gap: 9px;
}

.side-btn {
    height: 38px;
    display: flex;
    align-items: center;
    justify-content: center;
}

.side-on {
    background-color: #85808a;
}

.thumbs {
    width: 328px;
    flex: none;
    border-right: 1px solid #ddd6e1;
    box-sizing: border-box;
    display: flex;
    align-items: flex-start;
    padding: 15px 0 0 14px;
    gap: 6px;
}

.thumb-num {
    font-size: 16px;
    line-height: 30px;
    color: #6a656f;
    width: 10px;
}

.thumb {
    width: 273px;
    height: 158px;
    box-sizing: border-box;
    border: 4px solid #8b8690;
    padding-bottom: 15px;
    background-color: #fff;
    color: #3b3740;
    font-size: 16px;
    display: flex;
    align-items: center;
    justify-content: center;
}

.workarea {
    width: 1159px;
    flex: none;
    display: flex;
    flex-direction: column;
}

.canvas {
    flex: 1;
    min-height: 0;
    padding: 71px 0 0 22px;
    box-sizing: border-box;
    background-color: #ebe6ee;
}

.slide {
    width: 1095px;
    height: 616px;
    padding-top: 233px;
    box-sizing: border-box;
    background-color: #fff;
}

.slide-title {
    padding-right: 2px;
    font-size: 68.700px;
    line-height: 80px;
    text-align: center;
    color: #000;
}

.slide-sub {
    width: 821px;
    height: 150px;
    margin: 11px 0 0 137px;
    padding: 1px 2px 0 0;
    box-sizing: border-box;
    border: 1px dotted #98949c;
    font-size: 27.300px;
    line-height: 30px;
    text-align: center;
    color: #000;
}

.notes {
    height: 50px;
    flex: none;
    padding-left: 24px;
    border-top: 1px solid #e1dae5;
    box-sizing: border-box;
    font-size: 20.300px;
    line-height: 48px;
    color: #2f2b33;
    background-color: #f7effb;
}

.panel {
    width: 277px;
    flex: none;
    padding: 10px 13px 0 18px;
    box-sizing: border-box;
    border-left: 1px solid #ddd6e1;
    border-right: 1px solid #cfc8d4;
    font-size: 13.750px;
    color: #87828c;
}

.panel-label {
    font-size: 14px;
    font-weight: bold;
    line-height: 16px;
    color: #4f4a54;
}

.panel-opacity {
    margin-top: 12px;
}

.select {
    height: 26px;
    margin-top: 2px;
    display: flex;
    align-items: center;
    justify-content: space-between;
    padding: 0 5px 0 5px;
    box-sizing: border-box;
    background-color: #fff;
    border: 1px solid #e3dce6;
    color: #6f6a75;
}

.color-pick {
    width: 56px;
    height: 27px;
    margin-top: 12px;
    display: flex;
    align-items: center;
    gap: 4px;
    padding-left: 3px;
    box-sizing: border-box;
    border: 1px solid #ebe4ee;
}

.color-swatch {
    width: 37px;
    height: 21px;
    background-color: #fff;
}

.opacity-row {
    height: 26px;
    margin-top: 2px;
    display: flex;
    align-items: center;
}

.track {
    width: 96px;
    height: 4px;
    margin: 0 10px 0 7px;
    background-color: #dad3dd;
    border-radius: 2px;
    position: relative;
}

.knob {
    position: absolute;
    right: -8px;
    top: -6px;
    width: 12px;
    height: 12px;
    border: 2px solid #55505a;
    border-radius: 50%;
    background-color: #f7effb;
}

.spin {
    width: 78px;
    height: 26px;
    margin-left: auto;
    display: flex;
    align-items: center;
    justify-content: flex-end;
    gap: 8px;
    padding-right: 7px;
    box-sizing: border-box;
    background-color: #fff;
}

.spin-arrows {
    display: flex;
    flex-direction: column;
    gap: 6px;
}

.flip {
    transform: scaleY(-1);
}

.panel-line {
    height: 1px;
    margin: 9px 0 11px;
    background-color: #e3dce6;
}

.check {
    height: 17px;
    margin-bottom: 11px;
    display: flex;
    align-items: center;
    gap: 11px;
    color: #85808a;
}

.check-box {
    width: 17px;
    height: 17px;
    flex: none;
    box-sizing: border-box;
    background-color: #fff;
    border: 1px solid #ebe4ee;
}

.rightbar {
    flex: 1;
    display: flex;
    flex-direction: column;
    padding-top: 20px;
}

.right-btn {
    height: 37px;
    margin-bottom: 11px;
    padding-left: 6px;
    box-sizing: border-box;
    display: flex;
    flex-direction: column;
    align-items: center;
    justify-content: center;
}

.right-on {
    background-color: #75707a;
}

.right-para {
    font-size: 20px;
    color: #aaa5b0;
}

.right-ta {
    font-size: 18px;
    color: #aaa5b0;
    line-height: 16px;
}

/* status bar */
.status {
    height: 26px;
    flex: none;
    display: flex;
    align-items: center;
    padding-top: 3px;
    border-top: 1px solid #e1dae5;
    box-sizing: border-box;
    color: #6f6a75;
    font-size: 13.700px;
    font-weight: bold;
}

.status-play {
    margin-left: 14px;
    flex: none;
    color: #55505a;
}

.status-chev {
    margin-left: 6px;
}

.status-slide {
    margin-left: 11px;
}

.status-right {
    margin-left: auto;
    display: flex;
    align-items: center;
}

.status-lang {
    color: #c7c2cb;
}

.status-chev2 {
    margin-left: 7px;
}

.status-globe {
    margin-left: 11px;
}

.status-btn {
    width: 24px;
    height: 23px;
    margin-left: 16px;
    background-color: #85808a;
    display: flex;
    align-items: center;
    justify-content: center;
    position: relative;
}

.abc {
    position: absolute;
    left: 3px;
    top: 2px;
    font-size: 8px;
    font-weight: normal;
    color: #f2edf5;
}

.status-div {
    width: 1px;
    height: 24px;
    margin-left: 12.500px;
    background-color: #ddd6e1;
}

.status-fit {
    margin-left: 11px;
}

.status-width {
    margin-left: 16px;
}

.status-minus {
    margin-left: 22px;
}

.status-zoom {
    margin-left: 25px;
    font-size: 14px;
    color: #55505a;
}

.status-plus {
    margin: 0 49px 0 25px;
}

/* notification */
.toast {
    position: absolute;
    left: 681px;
    top: 35px;
    width: 628px;
    height: 85px;
    display: flex;
    align-items: center;
    gap: 14px;
    padding: 2px 0 0 18px;
    box-sizing: border-box;
    border-radius: 9px;
    background-color: #fff;
    font-family: "Noto Sans", sans-serif;
    font-size: 17.350px;
    line-height: 26px;
    color: #5a565e;
}

.toast-thumb {
    flex: none;
}

/* screenshot ui */
.shot-tip {
    position: absolute;
    left: 877px;
    top: 793px;
    width: 163px;
    height: 35px;
    border-radius: 18px;
    background-color: #201e22;
    color: #e8e6e9;
    font-family: "Noto Sans", sans-serif;
    font-size: 17.800px;
    line-height: 35px;
    text-align: center;
}

.shot {
    position: absolute;
    left: 780px;
    top: 835px;
    width: 359px;
    height: 173px;
    padding: 18px 18px 0;
    box-sizing: border-box;
    border-radius: 24px;
    background-color: #1b191c;
    box-shadow: 0 2px 12px rgba(0, 0, 0, 0.45);
    font-family: "Noto Sans", sans-serif;
}

.shot-modes {
    display: flex;
    justify-content: space-between;
    margin-left: -1px;
}

.shot-mode {
    width: 99px;
    height: 80px;
    display: flex;
    flex-direction: column;
    align-items: center;
    justify-content: flex-end;
    padding-bottom: 12px;
    gap: 7px;
    box-sizing: border-box;
    border-radius: 9px;
    color: #c9c7ca;
    font-size: 15px;
    line-height: 18px;
}

.shot-mode-on {
    background-color: #4f4d50;
}

.shot-bottom {
    margin-top: 12px;
    display: flex;
    align-items: center;
    margin-left: 5px;
}

.shot-toggle {
    width: 95px;
    height: 38px;
    display: flex;
    align-items: center;
    padding-left: 0;
    border-radius: 5px;
    background-color: #2b292d;
}

.shot-toggle-on,
.shot-toggle-off {
    width: 45px;
    height: 32px;
    display: flex;
    align-items: center;
    justify-content: center;
}

.shot-toggle-on {
    background-color: #fff;
    border-radius: 3px;
}

.shot-toggle-off {
    width: 50px;
}

.shutter {
    width: 52px;
    height: 52px;
    margin-left: 35px;
    box-sizing: border-box;
    border: 3px solid #f2f0f3;
    border-radius: 50%;
    display: flex;
    align-items: center;
    justify-content: center;
    flex: none;
}

.shutter-in {
    width: 40px;
    height: 40px;
    border-radius: 50%;
    background-color: #f2f0f3;
}

.shot-pointer {
    margin-left: auto;
    margin-right: 13px;
}

.shot-close {
    position: absolute;
    left: 1115px;
    top: 821px;
    width: 38px;
    height: 38px;
    padding: 0;
    border: none;
    border-radius: 50%;
    background-color: #353337;
    display: flex;
    align-items: center;
    justify-content: center;
}

.cursor {
    position: absolute;
    left: 939px;
    top: 890px;
}
```
